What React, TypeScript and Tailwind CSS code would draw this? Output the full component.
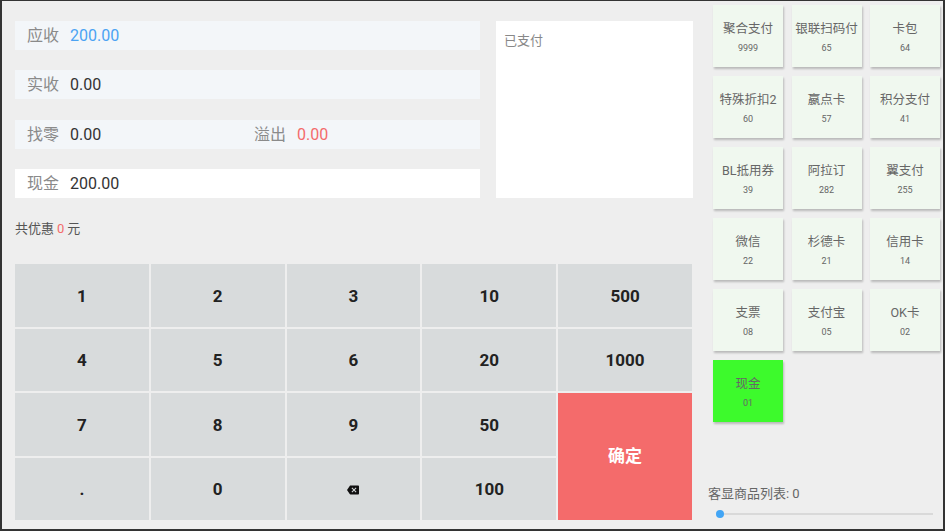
import React from 'react';

const font = { fontFamily: 'Roboto, "Noto Sans CJK SC", sans-serif' };

const payTypes = [
  { name: '聚合支付', code: '9999' },
  { name: '银联扫码付', code: '65' },
  { name: '卡包', code: '64' },
  { name: '特殊折扣2', code: '60' },
  { name: '嬴点卡', code: '57' },
  { name: '积分支付', code: '41' },
  { name: 'BL抵用券', code: '39' },
  { name: '阿拉订', code: '282' },
  { name: '翼支付', code: '255' },
  { name: '微信', code: '22' },
  { name: '杉德卡', code: '21' },
  { name: '信用卡', code: '14' },
  { name: '支票', code: '08' },
  { name: '支付宝', code: '05' },
  { name: 'OK卡', code: '02' },
  { name: '现金', code: '01', active: true },
];

function Backspace() {
  return (
    <svg width="12" height="12" viewBox="0 0 24 24" fill="#111">
      <path d="M22 3H7c-.69 0-1.23.35-1.59.88L0 12l5.41 8.11c.36.53.9.89 1.59.89h15c1.1 0 2-.9 2-2V5c0-1.1-.9-2-2-2zm-3 12.59L17.59 17 14 13.41 10.41 17 9 15.59 12.59 12 9 8.41 10.41 7 14 10.59 17.59 7 19 8.41 15.41 12 19 15.59z" />
    </svg>
  );
}

function Key({ children }: { children: React.ReactNode }) {
  return (
    <button className="bg-[#d8dbdc] flex items-center justify-center pt-[2px] text-[17px] font-bold text-[#222]">
      {children}
    </button>
  );
}

export default function App() {
  return (
    <div
      style={font}
      className="w-[945px] h-[531px] box-border border-l-2 border-t border-r-2 border-b-2 border-[#333] bg-[#eeeeee] flex overflow-hidden"
    >
      {/* left */}
      <div className="w-[691px] pl-[13px] pt-[20px] flex flex-col shrink-0">
        <div className="flex gap-[16px]">
          <div className="w-[465px] flex flex-col gap-[20.4px]">
            <div className="h-[29px] bg-[#f3f6f9] flex items-center pl-[12px] pt-[1px] text-[16px]">
              <span className="text-[#8a8a8a] w-[43px]">应收</span>
              <span className="text-[#4ba3f3]">200.00</span>
            </div>
            <div className="h-[29px] bg-[#f3f6f9] flex items-center pl-[12px] pt-[1px] text-[16px]">
              <span className="text-[#8a8a8a] w-[43px]">实收</span>
              <span className="text-[#333]">0.00</span>
            </div>
            <div className="h-[29px] bg-[#f3f6f9] flex items-center pl-[12px] pt-[1px] text-[16px]">
              <span className="text-[#8a8a8a] w-[43px]">找零</span>
              <span className="text-[#333] w-[184px]">0.00</span>
              <span className="text-[#8a8a8a] w-[43px]">溢出</span>
              <span className="text-[#f36b6b]">0.00</span>
            </div>
            <div className="h-[29px] bg-white flex items-center pl-[12px] pt-[1px] text-[16px]">
              <span className="text-[#8a8a8a] w-[43px]">现金</span>
              <span className="text-[#333]">200.00</span>
            </div>
          </div>
          <div className="w-[197px] h-[177px] bg-white px-[8px] pt-[10px] text-[13px] text-[#888]">已支付</div>
        </div>

        <div className="mt-[21px] h-[20px] flex items-center text-[13px] text-[#555]">
          共优惠<span className="text-[#f36b6b] mx-[3px]">0</span>元
        </div>

        <div className="mt-[25px] w-[677px] h-[256px] grid grid-cols-5 grid-rows-4 gap-[2px]">
          <Key>1</Key>
          <Key>2</Key>
          <Key>3</Key>
          <Key>10</Key>
          <Key>500</Key>
          <Key>4</Key>
          <Key>5</Key>
          <Key>6</Key>
          <Key>20</Key>
          <Key>1000</Key>
          <Key>7</Key>
          <Key>8</Key>
          <Key>9</Key>
          <Key>50</Key>
          <button className="row-span-2 bg-[#f46b6b] text-white text-[17px] font-bold flex items-center justify-center">
            确定
          </button>
          <Key>.</Key>
          <Key>0</Key>
          <Key>
            <Backspace />
          </Key>
          <Key>100</Key>
        </div>
      </div>

      {/* right */}
      <div className="flex-1 pl-[15px] pt-[4px] pb-[11px] flex flex-col">
        <div className="ml-[5px] grid grid-cols-[70px_70px_70px] gap-x-[8.5px] gap-y-[9px]">
          {payTypes.map((p) => (
            <div
              key={p.name}
              className={`h-[62px] flex flex-col items-center justify-center pt-[2px] shadow-[1px_2px_2px_rgba(0,0,0,0.22)] ${
                p.active ? 'bg-[#3dfa2c]' : 'bg-[#f0f8ef]'
              }`}
            >
              <span className="text-[12.5px] leading-[16px] text-[#666]">{p.name}</span>
              <span className="text-[9px] leading-[12px] mt-[5px] text-[#666]">{p.code}</span>
            </div>
          ))}
        </div>

        <div className="mt-auto">
          <div className="h-[18px] flex items-center pt-[1px] text-[13px] text-[#666]">客显商品列表: 0</div>
          <div className="mt-[8px] ml-[12px] w-[213px] h-[8px] relative flex items-center">
            <div className="w-full h-[2px] bg-[#d9d9d9]" />
            <div className="absolute left-[-4px] w-[8px] h-[8px] rounded-full bg-[#42a5f5]" />
          </div>
        </div>
      </div>
    </div>
  );
}
